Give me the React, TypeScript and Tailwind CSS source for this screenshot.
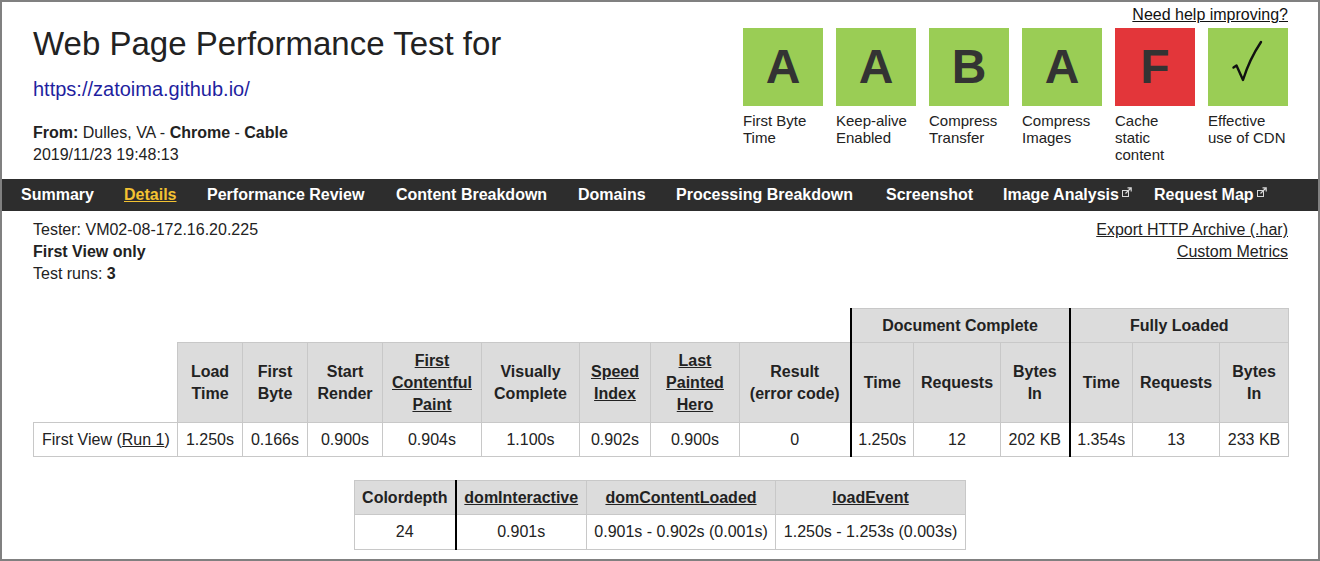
const grades = [
  { grade: "A", lines: ["First Byte", "Time"], bg: "bg-[#9acd55]" },
  { grade: "A", lines: ["Keep-alive", "Enabled"], bg: "bg-[#9acd55]" },
  { grade: "B", lines: ["Compress", "Transfer"], bg: "bg-[#9acd55]" },
  { grade: "A", lines: ["Compress", "Images"], bg: "bg-[#9acd55]" },
  { grade: "F", lines: ["Cache", "static", "content"], bg: "bg-[#e3363a]" },
  { grade: "check", lines: ["Effective", "use of CDN"], bg: "bg-[#9acd55]" },
];

// fixed slots so each tab starts where the original does
const navItems = [
  { label: "Summary", cls: "w-[103px]" },
  { label: "Details", cls: "w-[83px]", active: true },
  { label: "Performance Review", cls: "w-[189px]" },
  { label: "Content Breakdown", cls: "w-[182px]" },
  { label: "Domains", cls: "w-[98px]" },
  { label: "Processing Breakdown", cls: "w-[210px]" },
  { label: "Screenshot", cls: "w-[117px]" },
  { label: "Image Analysis", cls: "w-[151px]", ext: true },
  { label: "Request Map", cls: "", ext: true },
];

const metricCols = [
  { lines: ["Load", "Time"] },
  { lines: ["First", "Byte"] },
  { lines: ["Start", "Render"] },
  { lines: ["First", "Contentful", "Paint"], link: true },
  { lines: ["Visually", "Complete"] },
  { lines: ["Speed", "Index"], link: true },
  { lines: ["Last", "Painted", "Hero"], link: true },
  { lines: ["Result", "(error code)"] },
];

const colWidths = [
  "w-[144px]", "w-[65px]", "w-[65px]", "w-[75px]", "w-[99px]", "w-[98px]", "w-[71px]",
  "w-[89px]", "w-[111px]", "w-[63px]", "w-[87px]", "w-[69px]", "w-[63px]", "w-[87px]", "w-[69px]",
];

const values = ["1.250s", "0.166s", "0.900s", "0.904s", "1.100s", "0.902s", "0.900s", "0"];

function CheckMark() {
  return (
    <svg width="80" height="78" viewBox="0 0 80 78">
      <path
        d="M25.5 39.5 L28.5 37.5 L35 52 C39 39 45 26 53 14"
        fill="none"
        stroke="#111"
        strokeWidth="2.4"
        strokeLinejoin="round"
        strokeLinecap="round"
      />
    </svg>
  );
}

function ExtIcon() {
  return (
    <svg width="10" height="10" viewBox="0 0 10 10" className="mb-[7px] ml-[3px]">
      <rect x="0.5" y="3.5" width="6" height="6" fill="none" stroke="#d8d8d8" strokeWidth="1" />
      <path d="M3.5 6.5 L9 1 M5.5 0.8 H9.2 V4.5" fill="none" stroke="#d8d8d8" strokeWidth="1.2" />
    </svg>
  );
}

const cell = "border border-[#c8c8c8]";
const thick = "border-l-2 border-l-black";

export default function App() {
  return (
    <div className="box-border h-[561px] w-[1320px] overflow-hidden border-2 border-[#808080] bg-white font-['Liberation_Sans',Arial,sans-serif] text-[16px] text-[#222]">
      <header className="flex items-start justify-between pl-[31px] pr-[30px]">
        <div className="pt-[22px]">
          <h1 className="h-[40px] text-[33px] font-normal leading-[40px] text-[#222]">
            Web Page Performance Test for
          </h1>
          <a className="mt-[13px] block h-[24px] text-[20px] leading-[24px] text-[#1f1f9f]">
            https://zatoima.github.io/
          </a>
          <div className="mt-[21px] leading-[22px]">
            <div>
              <b>From:</b> Dulles, VA - <b>Chrome</b> - <b>Cable</b>
            </div>
            <div>2019/11/23 19:48:13</div>
          </div>
        </div>
        <div className="flex flex-col items-end pt-[2px]">
          <a className="leading-[22px] text-[#111] underline">Need help improving?</a>
          <div className="mt-[2px] flex gap-[13px]">
            {grades.map((g, i) => (
              <div key={i} className="w-[80px]">
                <div className={`flex h-[78px] w-[80px] items-center justify-center ${g.bg}`}>
                  {g.grade === "check" ? (
                    <CheckMark />
                  ) : (
                    <span className="text-[48px] font-bold leading-none text-[#333]">{g.grade}</span>
                  )}
                </div>
                <div className="mt-[6px] text-[15px] leading-[17px] text-[#222]">
                  {g.lines.map((l) => (
                    <div key={l}>{l}</div>
                  ))}
                </div>
              </div>
            ))}
          </div>
        </div>
      </header>

      <nav className="mt-[13px] flex h-[32px] items-center bg-[#2d2d2d] pl-[19px] text-[16px] font-bold text-white">
        {navItems.map((n) => (
          <span key={n.label} className={`flex shrink-0 items-center ${n.cls}`}>
            <span className={n.active ? "text-[#f3c232] underline" : ""}>{n.label}</span>
            {n.ext && <ExtIcon />}
          </span>
        ))}
      </nav>

      <main className="pl-[31px] pr-[30px] pt-[8px]">
        <div className="flex justify-between leading-[22px]">
          <div>
            <div>Tester: VM02-08-172.16.20.225</div>
            <div className="font-bold">First View only</div>
            <div>
              Test runs: <b>3</b>
            </div>
          </div>
          <div className="flex flex-col items-end">
            <a className="underline">Export HTTP Archive (.har)</a>
            <a className="underline">Custom Metrics</a>
          </div>
        </div>

        <table className="mt-[23px] w-[1255px] table-fixed border-collapse text-center">
          <colgroup>
            {colWidths.map((w, i) => (
              <col key={i} className={w} />
            ))}
          </colgroup>
          <thead>
            <tr className="h-[34px]">
              <th colSpan={9} />
              <th colSpan={3} className={`${cell} ${thick} bg-[#dcdcdc] font-bold`}>
                Document Complete
              </th>
              <th colSpan={3} className={`${cell} ${thick} bg-[#dcdcdc] font-bold`}>
                Fully Loaded
              </th>
            </tr>
            <tr className="h-[80px] leading-[22px]">
              <th />
              {metricCols.map((c, i) => (
                <th key={i} className={`${cell} bg-[#dcdcdc] font-bold`}>
                  {c.lines.map((l) => (
                    <div key={l} className={c.link ? "underline" : ""}>
                      {l}
                    </div>
                  ))}
                </th>
              ))}
              <th className={`${cell} ${thick} bg-[#dcdcdc] font-bold`}>Time</th>
              <th className={`${cell} bg-[#dcdcdc] font-bold`}>Requests</th>
              <th className={`${cell} bg-[#dcdcdc] font-bold`}>
                Bytes
                <br />
                In
              </th>
              <th className={`${cell} ${thick} bg-[#dcdcdc] font-bold`}>Time</th>
              <th className={`${cell} bg-[#dcdcdc] font-bold`}>Requests</th>
              <th className={`${cell} bg-[#dcdcdc] font-bold`}>
                Bytes
                <br />
                In
              </th>
            </tr>
          </thead>
          <tbody>
            <tr className="h-[34px]">
              <td className={`${cell} pl-[8px] text-left`}>
                First View (<span className="underline">Run 1</span>)
              </td>
              {values.map((v, i) => (
                <td key={i} className={cell}>
                  {v}
                </td>
              ))}
              <td className={`${cell} ${thick}`}>1.250s</td>
              <td className={cell}>12</td>
              <td className={`${cell} whitespace-nowrap`}>202 KB</td>
              <td className={`${cell} ${thick}`}>1.354s</td>
              <td className={cell}>13</td>
              <td className={`${cell} whitespace-nowrap`}>233 KB</td>
            </tr>
          </tbody>
        </table>

        <div className="mt-[23px] flex justify-center pr-[1px]">
          <table className="w-[611px] table-fixed border-collapse text-center">
            <colgroup>
              <col className="w-[101px]" />
              <col className="w-[131px]" />
              <col className="w-[189px]" />
              <col className="w-[190px]" />
            </colgroup>
            <thead>
              <tr className="h-[34px]">
                <th className={`${cell} bg-[#dcdcdc] font-bold`}>Colordepth</th>
                <th className={`${cell} ${thick} bg-[#dcdcdc] font-bold underline`}>domInteractive</th>
                <th className={`${cell} bg-[#dcdcdc] font-bold underline`}>domContentLoaded</th>
                <th className={`${cell} bg-[#dcdcdc] font-bold underline`}>loadEvent</th>
              </tr>
            </thead>
            <tbody>
              <tr className="h-[35px] whitespace-nowrap">
                <td className={cell}>24</td>
                <td className={`${cell} ${thick}`}>0.901s</td>
                <td className={cell}>0.901s - 0.902s (0.001s)</td>
                <td className={cell}>1.250s - 1.253s (0.003s)</td>
              </tr>
            </tbody>
          </table>
        </div>
      </main>
    </div>
  );
}
